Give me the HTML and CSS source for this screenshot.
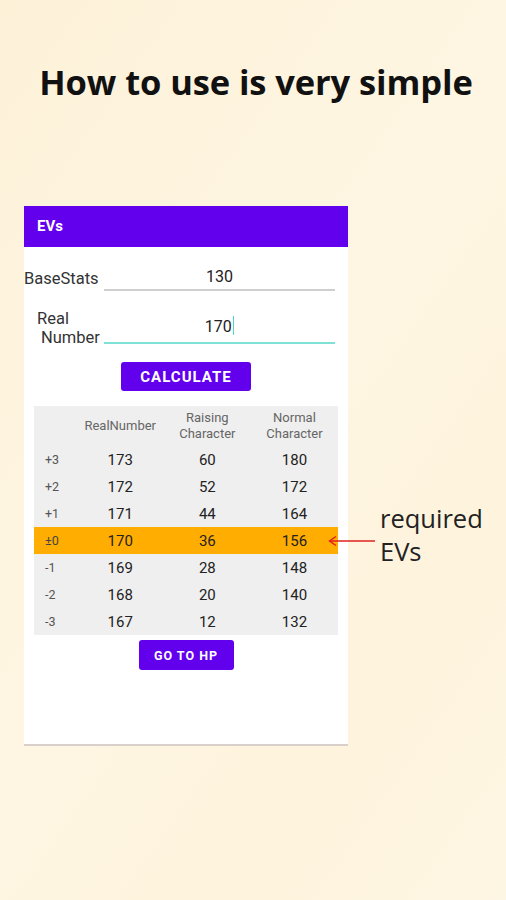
FILE: index.html
```html
<!DOCTYPE html>
<html>
<head>
<meta charset="utf-8">
<link rel="stylesheet" href="styles.css">
</head>
<body>
<div class="page">
  <h1 class="title">How to use is very simple</h1>
  <div class="stage">
    <div class="phone">
      <div class="appbar">EVs</div>
      <div class="form">
        <div class="field">
          <div class="label one">BaseStats</div>
          <div class="input"><span>130</span></div>
        </div>
        <div class="field second">
          <div class="label two"><span class="l1">Real</span><span class="l2">Number</span></div>
          <div class="input focus"><span>170<i class="caret"></i></span></div>
        </div>
        <div class="btnrow"><button class="btn calc">CALCULATE</button></div>
        <div class="table">
          <div class="row head">
            <div class="c0"></div>
            <div class="c">RealNumber</div>
            <div class="c">Raising<br>Character</div>
            <div class="c">Normal<br>Character</div>
          </div>
          <div class="row"><div class="c0">+3</div><div class="c">173</div><div class="c">60</div><div class="c">180</div></div>
          <div class="row"><div class="c0">+2</div><div class="c">172</div><div class="c">52</div><div class="c">172</div></div>
          <div class="row"><div class="c0">+1</div><div class="c">171</div><div class="c">44</div><div class="c">164</div></div>
          <div class="row hl"><div class="c0">±0</div><div class="c">170</div><div class="c">36</div><div class="c">156</div></div>
          <div class="row"><div class="c0">-1</div><div class="c">169</div><div class="c">28</div><div class="c">148</div></div>
          <div class="row"><div class="c0">-2</div><div class="c">168</div><div class="c">20</div><div class="c">140</div></div>
          <div class="row"><div class="c0">-3</div><div class="c">167</div><div class="c">12</div><div class="c">132</div></div>
        </div>
        <div class="btnrow"><button class="btn hp">GO TO HP</button></div>
      </div>
    </div>
    <div class="note">
      <svg class="arrow" width="48" height="12" viewBox="0 0 48 12"><path d="M47 6H2" stroke="#e02020" stroke-width="1.5" fill="none"/><path d="M8 1.5L1.5 6L8 10.5" stroke="#e02020" stroke-width="1.5" fill="none"/></svg>
      <div class="notetext">required<br>EVs</div>
    </div>
  </div>
</div>
</body>
</html>
```

FILE: styles.css
```css
* { box-sizing: border-box; }
html, body { margin: 0; padding: 0; }
body {
  width: 506px;
  height: 900px;
  overflow: hidden;
  background: linear-gradient(125deg, #fdf1d8 0%, #fef6e3 50%, #fef3dc 75%, #fef6e4 100%);
  font-family: Roboto, "Noto Sans", sans-serif;
}
.page { width: 506px; height: 900px; }
.title {
  margin: 0;
  padding-top: 59px;
  padding-left: 6px;
  height: 206px;
  text-align: center;
  font-family: "Open Sans", sans-serif;
  font-weight: 700;
  font-size: 34.5px;
  color: #111;
  letter-spacing: -0.1px;
  line-height: 46px;
}
.stage { display: flex; }
.phone {
  margin-left: 24px;
  width: 324px;
  height: 540px;
  background: #fff;
  border-bottom: 2px solid #d9d0cc;
}
.appbar {
  height: 41px;
  background: #6200ee;
  color: #fff;
  font-weight: 700;
  font-size: 15px;
  line-height: 41px;
  padding-left: 13px;
}
.form { display: flex; flex-direction: column; }
.field {
  display: flex;
  align-items: flex-end;
  margin-top: 20px;
  height: 24px;
}
.field.second { margin-top: 15px; height: 38px; }
.label { width: 80px; color: #333; font-size: 16.5px; white-space: nowrap; }
.label.one { padding-bottom: 3px; }
.label.two { display: flex; flex-direction: column; line-height: 19px; margin-bottom: -3px; }
.l1 { padding-left: 13px; }
.l2 { padding-left: 17px; }
.input {
  width: 231px;
  border-bottom: 2px solid #cfcfcf;
  text-align: center;
  font-size: 16px;
  color: #222;
  padding-bottom: 4px;
  height: 24px;
}
.input.focus { border-bottom-color: #7fe0d6; height: 28px; padding-bottom: 6px; }
.caret { display: inline-block; width: 1.5px; height: 19px; background: #4fd6c6; vertical-align: -3px; margin-left: 1px; }
.btnrow { display: flex; justify-content: center; }
.btn {
  background: #6200ee;
  color: #fff;
  border: none;
  border-radius: 3px;
  font-family: Roboto, sans-serif;
  font-weight: 700;
  letter-spacing: 1px;
  padding: 0;
}
.calc { margin-top: 18px; width: 130px; height: 29px; font-size: 15px; }
.hp { margin-top: 5px; width: 95px; height: 30px; font-size: 12.5px; }
.table {
  margin: 15px 10px 0 10px;
  width: 304px;
  background: #efefef;
  display: flex;
  flex-direction: column;
}
.row { display: flex; align-items: center; height: 27px; font-size: 15px; color: #222; }
.row.head { height: 40px; font-size: 13px; color: #666; line-height: 16px; }
.row.hl { background: #ffad00; }
.c0 { width: 43px; padding-left: 11px; font-size: 12.5px; color: #555; }
.row.hl .c0 { color: #444; }
.c { width: 88px; text-align: center; }
.note { display: flex; align-items: flex-start; }
.arrow { margin-left: -20px; margin-top: 329px; }
.notetext {
  margin-left: 4px;
  margin-top: 296px;
  font-family: "Open Sans", sans-serif;
  font-size: 25.5px;
  line-height: 33px;
  color: #222;
}
```
